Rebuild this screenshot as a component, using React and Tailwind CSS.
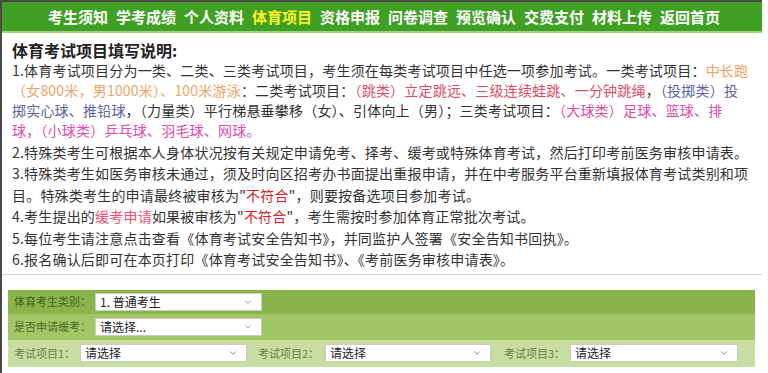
import { ChevronDown } from "lucide-react";

const navItems = ["考生须知", "学考成绩", "个人资料", "体育项目", "资格申报", "问卷调查", "预览确认", "交费支付", "材料上传", "返回首页"];

const Select = ({ value, className }) => (
  <div className={`shrink-0 flex items-center justify-between h-[18px] bg-white border border-[#c9c9c9] pl-1 pr-2 text-[12px] text-[#222] ${className}`}>
    <span>{value}</span>
    <ChevronDown size={10} strokeWidth={2} className="text-[#777]" />
  </div>
);

const Label = ({ children, className }) => (
  <span className={`shrink-0 whitespace-nowrap text-[11px] ${className}`}>{children}</span>
);

const App = () => {
  return (
    <div className="w-[768px] h-[373px] bg-white overflow-hidden font-['Noto_Sans_CJK_SC',sans-serif]">
      <div className="w-[762px] h-[373px] border-l-2 border-t-2 border-[#4a4a4a]">
        {/* top nav */}
        <nav className="h-[31px] bg-[#40a023] border-b-2 border-[#9bd57d] flex items-center justify-center gap-[8px] pl-[4px]">
          {navItems.map((item) => (
            <span
              key={item}
              className={`text-[15px] font-bold leading-none ${item === "体育项目" ? "text-[#fff22a]" : "text-white"}`}
            >
              {item}
            </span>
          ))}
        </nav>

        {/* instructions */}
        <div className="border-b border-[#d6d6d6] pl-[10px] pt-[7px] pb-[3px] text-[#333] text-[14px] tracking-[0.2px] whitespace-nowrap">
          <h2 className="text-[16px] font-bold leading-[20px] text-[#222] tracking-normal">体育考试项目填写说明:</h2>
          <div className="leading-[20px]">
            <p>
              1.体育考试项目分为一类、二类、三类考试项目，考生须在每类考试项目中任选一项参加考试。一类考试项目：
              <span className="text-[#f0a263]">中长跑</span>
            </p>
            <p>
              <span className="text-[#f0a263]">（女800米，男1000米）、100米游泳</span>：二类考试项目：
              <span className="text-[#de4d66]">（跳类）立定跳远、三级连续蛙跳、一分钟跳绳</span>，
              <span className="text-[#5b62a6]">（投掷类）投</span>
            </p>
            <p>
              <span className="text-[#5b62a6]">掷实心球、推铅球</span>，（力量类）平行梯悬垂攀移（女）、引体向上（男）；三类考试项目：
              <span className="text-[#e04cae]">（大球类）足球、篮球、排</span>
            </p>
            <p>
              <span className="text-[#e04cae]">球，（小球类）乒乓球、羽毛球、网球。</span>
            </p>
          </div>
          <div className="leading-[21.5px] mt-[1.5px]">
            <p>2.特殊类考生可根据本人身体状况按有关规定申请免考、择考、缓考或特殊体育考试，然后打印考前医务审核申请表。</p>
            <p>3.特殊类考生如医务审核未通过，须及时向区招考办书面提出重报申请，并在中考服务平台重新填报体育考试类别和项</p>
            <p>
              目。特殊类考生的申请最终被审核为"<span className="text-[#e0201c]">不符合</span>"，则要按备选项目参加考试。
            </p>
            <p>
              4.考生提出的<span className="text-[#f2506e]">缓考申请</span>如果被审核为"<span className="text-[#e0201c]">不符合</span>"，考生需按时参加体育正常批次考试。
            </p>
            <p>5.每位考生请注意点击查看《体育考试安全告知书》，并同监护人签署《安全告知书回执》。</p>
            <p>6.报名确认后即可在本页打印《体育考试安全告知书》、《考前医务审核申请表》。</p>
          </div>
        </div>

        {/* form panel */}
        <div className="mt-[15px] ml-[6px] w-[747px] text-[12px]">
          <div className="h-[24px] bg-[#89b34b] flex items-center pl-[6px]">
            <Label className="w-[81px] text-[#3f6419]">体育考生类别：</Label>
            <Select value="1. 普通考生" className="w-[167px]" />
          </div>
          <div className="h-[26px] bg-[#a2c666] flex items-center pl-[6px]">
            <Label className="w-[81px] text-[#4a6f21]">是否申请缓考：</Label>
            <Select value="请选择..." className="w-[167px]" />
          </div>
          <div className="h-[27px] bg-[#c8dea0] flex items-center pl-[6px]">
            <Label className="w-[66px] text-[#6d7d4c]">考试项目1：</Label>
            <Select value="请选择" className="w-[167px]" />
            <Label className="w-[67px] ml-[11px] text-[#6d7d4c]">考试项目2：</Label>
            <Select value="请选择" className="w-[166px]" />
            <Label className="w-[66px] ml-[13px] text-[#6d7d4c]">考试项目3：</Label>
            <Select value="请选择" className="w-[168px]" />
          </div>
        </div>
      </div>
    </div>
  );
};

export default App;
